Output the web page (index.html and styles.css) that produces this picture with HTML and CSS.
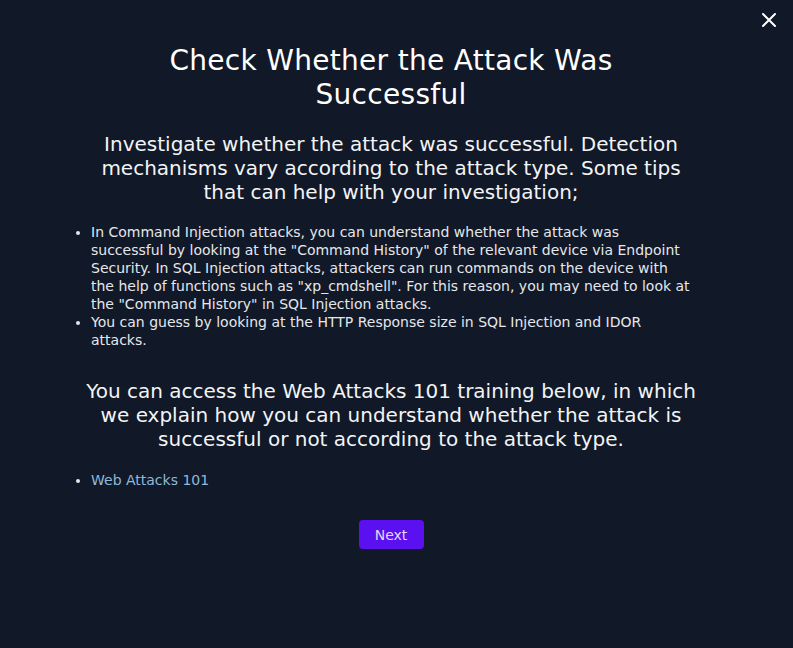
FILE: index.html
```html
<!DOCTYPE html>
<html lang="en">
<head>
<meta charset="utf-8">
<link rel="stylesheet" href="styles.css">
</head>
<body>
<div class="modal">
  <button class="close" aria-label="Close">
    <svg width="16" height="16" viewBox="0 0 16 16"><path d="M2 2 L14 14 M14 2 L2 14" stroke="#ffffff" stroke-width="2" stroke-linecap="round"/></svg>
  </button>
  <div class="content">
    <h1 class="title">Check Whether the Attack Was Successful</h1>
    <h2 class="lead">Investigate whether the attack was successful. Detection mechanisms vary according to the attack type. Some tips that can help with your investigation;</h2>
    <ul class="tips">
      <li>In Command Injection attacks, you can understand whether the attack was successful by looking at the "Command History" of the relevant device via Endpoint Security. In SQL Injection attacks, attackers can run commands on the device with the help of functions such as "xp_cmdshell". For this reason, you may need to look at the "Command History" in SQL Injection attacks.</li>
      <li>You can guess by looking at the HTTP Response size in SQL Injection and IDOR attacks.</li>
    </ul>
    <h2 class="lead second">You can access the Web Attacks 101 training below, in which we explain how you can understand whether the attack is successful or not according to the attack type.</h2>
    <ul class="tips links">
      <li><a href="#">Web Attacks 101</a></li>
    </ul>
    <div class="actions">
      <button class="next">Next</button>
    </div>
  </div>
</div>
</body>
</html>
```
FILE: styles.css
```css
html, body {
  margin: 0;
  padding: 0;
  background: #111827;
  height: 100%;
}
body {
  font-family: "DejaVu Sans", "Liberation Sans", sans-serif;
  color: #ffffff;
}
.modal {
  position: relative;
  min-height: 648px;
  background: #111827;
  display: flex;
  justify-content: center;
}
.close {
  position: absolute;
  top: 12px;
  right: 16px;
  background: none;
  border: 0;
  padding: 0;
  width: 16px;
  height: 16px;
  cursor: pointer;
}
.content {
  width: 680px;
  margin-left: -11px;
  padding-top: 44px;
  display: flex;
  flex-direction: column;
  align-items: center;
}
.title {
  margin: 0;
  font-size: 28px;
  line-height: 34px;
  font-weight: 400;
  text-align: center;
  width: 480px;
  letter-spacing: 0.3px;
}
.lead {
  margin: 20px 0 0;
  font-size: 20px;
  line-height: 24px;
  font-weight: 400;
  text-align: center;
  color: #f3f4f6;
  width: 612px;
}
.tips {
  align-self: flex-start;
  width: 604px;
  margin: 19px 0 0;
  padding-left: 40px;
  font-size: 14px;
  line-height: 18px;
  color: #e5e7eb;
}
.lead.second {
  margin-top: 30px;
}
.links {
  margin-top: 20px;
}
.links a {
  color: #8fb8dc;
  text-decoration: none;
}
.actions {
  margin-top: 31px;
  display: flex;
  justify-content: center;
}
.next {
  background: #5b10f0;
  color: #e4d6ff;
  border: 0;
  border-radius: 4px;
  width: 65px;
  height: 29px;
  font-family: inherit;
  font-size: 14px;
  cursor: pointer;
}
```
